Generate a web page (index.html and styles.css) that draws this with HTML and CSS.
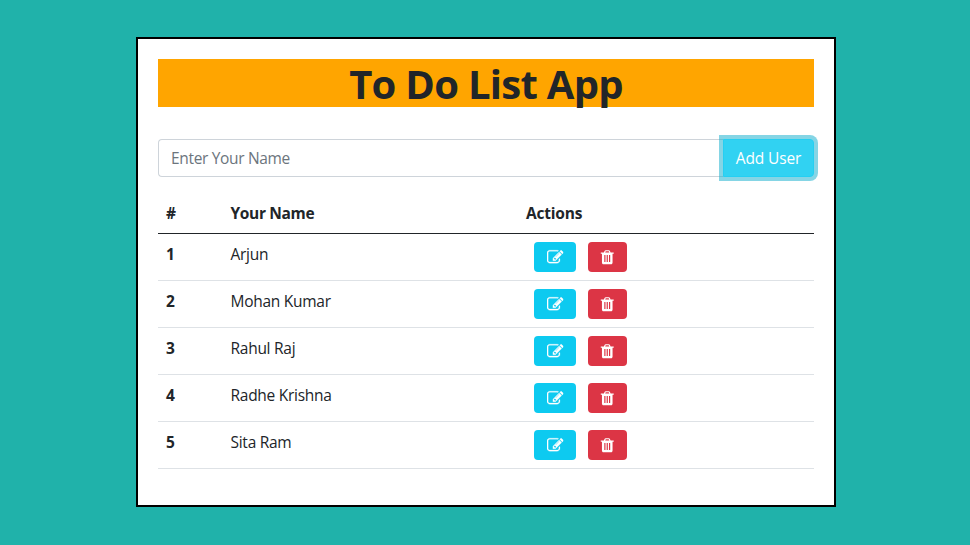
FILE: index.html
```html
<!DOCTYPE html>
<html lang="en">
<head>
<meta charset="utf-8">
<title>To Do List App</title>
<link rel="stylesheet" href="styles.css">
</head>
<body>
<svg width="0" height="0" class="sprite" aria-hidden="true">
  <symbol id="edit" viewBox="0 0 1792 1792"><path d="M888 1184l116-116-152-152-116 116v56h96v96h56zm440-720q-16-16-33 1l-350 350q-17 17-1 33t33-1l350-350q17-17 1-33zm80 594v190q0 119-84.5 203.5t-203.5 84.5h-832q-119 0-203.5-84.5t-84.500-203.500v-832q0-119 84.500-203.500t203.500-84.500h832q63 0 117 25 15 7 18 23 3 17-9 29l-49 49q-14 14-32 8-23-6-45-6h-832q-66 0-113 47t-47 113v832q0 66 47 113t113 47h832q66 0 113-47t47-113v-126q0-13 9-22l64-64q15-15 35-7t20 29zm-96-738l288 288-672 672h-288v-288zm444 132l-92 92-288-288 92-92q28-28 68-28t68 28l152 152q28 28 28 68t-28 68z"/></symbol>
  <symbol id="trash" viewBox="0 0 1792 1792"><path d="M704 1376v-704q0-14-9-23t-23-9h-64q-14 0-23 9t-9 23v704q0 14 9 23t23 9h64q14 0 23-9t9-23zm256 0v-704q0-14-9-23t-23-9h-64q-14 0-23 9t-9 23v704q0 14 9 23t23 9h64q14 0 23-9t9-23zm256 0v-704q0-14-9-23t-23-9h-64q-14 0-23 9t-9 23v704q0 14 9 23t23 9h64q14 0 23-9t9-23zm-544-992h448l-48-117q-7-9-17-11h-317q-10 2-17 11zm928 32v64q0 14-9 23t-23 9h-96v948q0 83-47 143.500t-113 60.500h-832q-66 0-113-58.500t-47-141.500v-952h-96q-14 0-23-9t-9-23v-64q0-14 9-23t23-9h309l70-167q15-37 54-63t79-26h320q40 0 79 26t54 63l70 167h309q14 0 23 9t9 23z"/></symbol>
</svg>
<main class="card">
  <h1 class="title">To Do List App</h1>
  <form class="entry">
    <input class="field" type="text" placeholder="Enter Your Name">
    <button class="add" type="button">Add User</button>
  </form>
  <div class="table">
    <div class="row head"><b>#</b><b>Your Name</b><b class="act-head">Actions</b></div>
    <div class="row"><b>1</b><span>Arjun</span><div class="actions"><button class="btn edit" type="button" aria-label="Edit"><svg><use href="#edit"/></svg></button><button class="btn trash" type="button" aria-label="Delete"><svg><use href="#trash"/></svg></button></div></div>
    <div class="row"><b>2</b><span>Mohan Kumar</span><div class="actions"><button class="btn edit" type="button" aria-label="Edit"><svg><use href="#edit"/></svg></button><button class="btn trash" type="button" aria-label="Delete"><svg><use href="#trash"/></svg></button></div></div>
    <div class="row"><b>3</b><span>Rahul Raj</span><div class="actions"><button class="btn edit" type="button" aria-label="Edit"><svg><use href="#edit"/></svg></button><button class="btn trash" type="button" aria-label="Delete"><svg><use href="#trash"/></svg></button></div></div>
    <div class="row"><b>4</b><span>Radhe Krishna</span><div class="actions"><button class="btn edit" type="button" aria-label="Edit"><svg><use href="#edit"/></svg></button><button class="btn trash" type="button" aria-label="Delete"><svg><use href="#trash"/></svg></button></div></div>
    <div class="row"><b>5</b><span>Sita Ram</span><div class="actions"><button class="btn edit" type="button" aria-label="Edit"><svg><use href="#edit"/></svg></button><button class="btn trash" type="button" aria-label="Delete"><svg><use href="#trash"/></svg></button></div></div>
  </div>
</main>
</body>
</html>
```
FILE: styles.css
```css
* { box-sizing: border-box; }
body {
  margin: 0;
  height: 545px;
  padding: 37px 0 0 136px;
  overflow: hidden;
  background: #20b2aa;
  color: #212529;
  font: 15.5px/24px "Segoe UI", "Open Sans", "Noto Sans", sans-serif;
}
.sprite { display: none; }
.card {
  width: 700px;
  height: 470px;
  padding: 20px;
  border: 2px solid #000;
  background: #fff;
}
.title {
  height: 48px;
  margin: 0 0 32px;
  background: orange;
  font-size: 40px;
  font-weight: 700;
  letter-spacing: -.72px;
  line-height: 50px;
  text-align: center;
}
.entry { display: flex; height: 38px; margin: 0 0 16px; }
.field {
  flex: 1;
  min-width: 0;
  padding: 6px 12px;
  border: 1px solid #ced4da;
  border-radius: 4px 0 0 4px;
  background: #fff;
  font: inherit;
  letter-spacing: -.33px;
}
.field::placeholder { color: #6c757d; opacity: 1; }
.add {
  width: 92px;
  margin-left: -1px;
  padding: 0;
  border: 1px solid #25cff2;
  border-radius: 0 4px 4px 0;
  background: #31d2f2;
  box-shadow: 0 0 0 4px rgba(11, 172, 204, .5);
  color: #fff;
  font: inherit;
  letter-spacing: -.12px;
  white-space: nowrap;
}
.add { width: 91px; margin-left: 0; }
.field { border-right: 0; }
.row {
  display: grid;
  grid-template-columns: 64.5px 295.5px 1fr;
  height: 47px;
  padding: 8px 0 0 8px;
  border-bottom: 1px solid #dee2e6;
  letter-spacing: -.27px;
}
.head { height: 41px; border-color: #212529; letter-spacing: -.35px; }
.act-head { letter-spacing: -.2px; }
.actions { display: flex; gap: 12px; padding-left: 8px; }
.btn {
  display: flex;
  align-items: center;
  justify-content: center;
  height: 30px;
  padding: 0;
  border: 0;
  border-radius: 4px;
}
.btn svg { width: 16.5px; height: 16.5px; fill: #fff; }
.edit { width: 42px; padding-left: 1px; background: #0dcaf0; }
.edit svg { stroke: #fff; stroke-width: 24px; }
.trash { width: 39px; padding-top: 1px; background: #dc3545; }
```
